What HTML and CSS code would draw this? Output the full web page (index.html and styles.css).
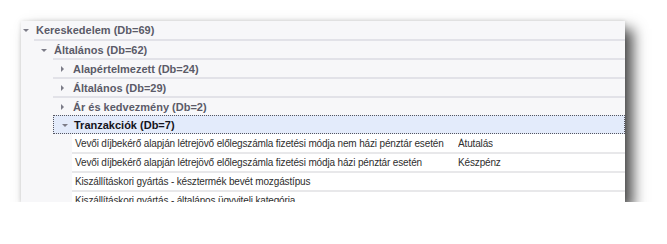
FILE: index.html
```html
<!DOCTYPE html>
<html lang="hu">
<head>
    <meta charset="UTF-8">
    <title>Tranzakciók</title>
    <link rel="stylesheet" href="styles.css">
</head>
<body>

<div class="grid-panel">
    <div class="row group level-0 first">
        <span class="arrow down"></span>
        <span class="caption">Kereskedelem (Db=69)</span>
    </div>
    <div class="row group level-1">
        <span class="arrow down"></span>
        <span class="caption">Általános (Db=62)</span>
    </div>
    <div class="row group level-2">
        <span class="arrow right"></span>
        <span class="caption">Alapértelmezett (Db=24)</span>
    </div>
    <div class="row group level-2">
        <span class="arrow right"></span>
        <span class="caption">Általános (Db=29)</span>
    </div>
    <div class="row group level-2">
        <span class="arrow right"></span>
        <span class="caption">Ár és kedvezmény (Db=2)</span>
    </div>
    <div class="row group level-2 selected">
        <span class="arrow down"></span>
        <span class="caption">Tranzakciók (Db=7)</span>
    </div>
    <div class="row data first">
        <span class="cell name">Vevői díjbekérő alapján létrejövő előlegszámla fizetési módja nem házi pénztár esetén</span>
        <span class="cell value">Átutalás</span>
    </div>
    <div class="row data">
        <span class="cell name">Vevői díjbekérő alapján létrejövő előlegszámla fizetési módja házi pénztár esetén</span>
        <span class="cell value">Készpénz</span>
    </div>
    <div class="row data">
        <span class="cell name">Kiszállításkori gyártás - késztermék bevét mozgástípus</span>
        <span class="cell value"></span>
    </div>
    <div class="row data">
        <span class="cell name">Kiszállításkori gyártás - általános ügyviteli kategória</span>
        <span class="cell value"></span>
    </div>
</div>

</body>
</html>
```

FILE: styles.css
```css
body {
    margin: 0;
    background-color: #fff;
    font-family: 'Liberation Sans', Arial, sans-serif;
    font-size: 11px;
}

.grid-panel {
    width: 604px;
    height: 181px;
    margin: 21px 0 0 21px;
    background-color: #f7f7f9;
    overflow: hidden;
    box-shadow: 8px 8px 13px rgba(0, 0, 0, 0.7), 0 0 4px rgba(0, 0, 0, 0.12);
}

.row {
    display: flex;
    align-items: center;
    height: 17px;
    border-top: 2px solid #e2e2e8;
    white-space: nowrap;
}

.row.first {
    height: 18px;
    border-top: 0;
}

.group .caption {
    font-weight: bold;
    color: #5b5b68;
}

.level-0 {
    padding-left: 2px;
}

.level-1 {
    margin-left: 13px;
    padding-left: 7px;
}

.level-2 {
    margin-left: 32px;
    padding-left: 8px;
}

.arrow {
    width: 0;
    height: 0;
    margin-right: 7px;
}

.arrow.down {
    border-left: 3px solid transparent;
    border-right: 3px solid transparent;
    border-top: 3px solid #7c7c88;
    margin-top: 1px;
}

.arrow.right {
    border-top: 3px solid transparent;
    border-bottom: 3px solid transparent;
    border-left: 3px solid #7c7c88;
    margin-right: 9px;
}

.selected {
    height: 17px;
    border: 1px dotted #55555f;
    background-color: #e3ebfb;
    padding-left: 8px;
}

.selected .caption {
    color: #141420;
}

.selected .arrow.down {
    margin-right: 6px;
}

.data {
    margin-left: 51px;
    background-color: #fff;
    border-top-color: #e8e8ea;
    color: #2e2e2e;
    font-size: 10px;
    letter-spacing: -0.15px;
}

.cell {
    flex: none;
    overflow: hidden;
}

.cell.name {
    width: 383px;
    padding-left: 3px;
}
```
